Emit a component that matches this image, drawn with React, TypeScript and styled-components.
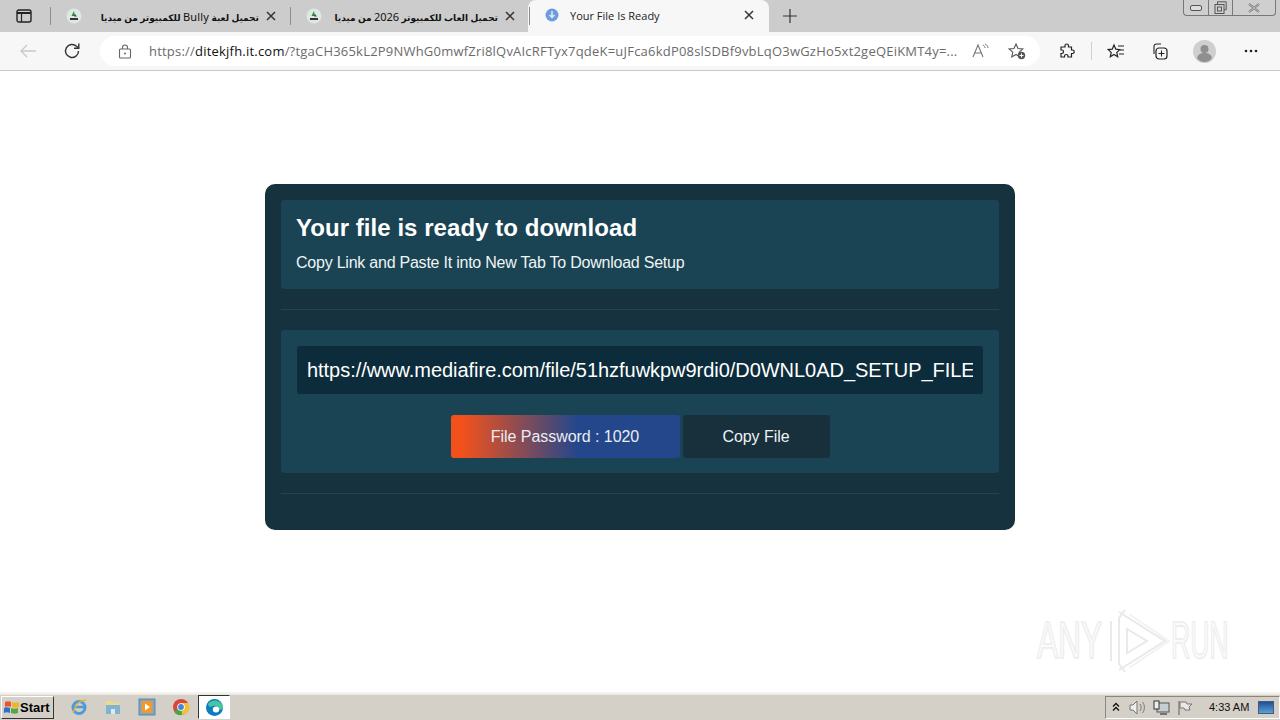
import React from "react";
import styled, { createGlobalStyle } from "styled-components";

const Global = createGlobalStyle`
  html, body { margin: 0; padding: 0; background: #fff; overflow: hidden; }
  #root { width: 1280px; height: 720px; }
  * { box-sizing: border-box; }
`;
const Page = styled.div`
  width: 1280px; height: 720px; display: flex; flex-direction: column; position: relative; overflow: hidden;
  font-family: "Liberation Sans", Arial, sans-serif;
`;
const TabStrip = styled.div`
  height: 32px; background: #cccccc; display: flex; align-items: stretch; position: relative; flex: none;
`;
const TabMenu = styled.div`
  width: 51px; display: flex; align-items: center; justify-content: center; padding-right: 3px;
  position: relative;
  &::after { content: ""; position: absolute; right: 0; top: 7px; height: 18px; width: 1px; background: #8d8d8d; }
`;
const BgTab = styled.div<{ $w: number }>`
  width: ${(p) => p.$w}px; display: flex; align-items: center; position: relative; padding-left: 15px;
  &::after { content: ""; position: absolute; right: 0; top: 7px; height: 18px; width: 1px; background: #8d8d8d; }
`;
const ActiveTab = styled.div`
  width: 241px; height: 32px; margin-left: -2px; background: #f7f7f7; border-radius: 8px 8px 0 0; display: flex; align-items: center; padding: 0 0 2px 17px;
`;
const TabTitle = styled.span`
  font: 700 9px "Noto Sans", "DejaVu Sans", sans-serif; color: #111; white-space: nowrap; flex: 1; direction: rtl; text-align: right; margin: 0 2px 0 0; min-width: 0;
  span { font-weight: 400; font-size: 11px; letter-spacing: 0.2px; }
`;
const ActiveTitle = styled.span`
  font: 400 11px "Open Sans", "Noto Sans", sans-serif; color: #222; flex: 1; margin-left: 11px;
`;
const CloseBtn = styled.span`
  width: 20px; height: 20px; margin-right: 10px; display: flex; align-items: center; justify-content: center; flex: none;
`;
const NewTab = styled.div`
  width: 42px; display: flex; align-items: center; justify-content: center;
`;
const WinButtons = styled.div`
  position: absolute; right: 4px; top: 0; width: 93px; height: 16px; border: 1px solid #777; border-top: 0; border-radius: 0 0 4px 4px; display: flex; background: #cfcfcf;
`;
const WinBtn = styled.div<{ $w: number; $line?: boolean }>`
  width: ${(p) => p.$w}px; display: flex; align-items: center; justify-content: center; border-right: ${(p) => (p.$line ? "1px solid #777" : "0")};
`;
const Toolbar = styled.div`
  height: 39px; background: #f7f7f7; border-bottom: 1px solid #c9c9c9; display: flex; align-items: center; flex: none; padding-left: 12px;
`;
const NavBtn = styled.div`
  width: 32px; height: 32px; display: flex; align-items: center; justify-content: center; margin-right: 12px;
`;
const AddressBar = styled.div`
  width: 940px; height: 30px; background: #fff; border-radius: 15px; display: flex; align-items: center; padding-left: 18px; flex: none; margin-right: 11px;
`;
const Url = styled.div`
  font: 400 13px "Open Sans", "Noto Sans", sans-serif; color: #6b6b6b; margin-left: 17px; width: 810px; white-space: nowrap; letter-spacing: 0.21px;
  b { font-weight: 400; color: #111; }
`;
const AddrIcon = styled.span<{ $gap: number }>`
  width: 20px; height: 20px; display: flex; align-items: center; justify-content: center; margin-left: ${(p) => p.$gap}px; flex: none;
`;
const ToolIcon = styled.div<{ $w?: number }>`
  width: ${(p) => p.$w ?? 44}px; display: flex; align-items: center; justify-content: center; flex: none; position: relative;
`;
const Divider = styled.span`
  width: 1px; height: 18px; background: #cfcfcf; flex: none; margin-left: 8px;
`;
const Main = styled.main`
  flex: 1; background: #fff; padding-top: 113px;
`;
const Card = styled.section`
  width: 750px; height: 346px; margin: 0 auto; background: #17323f; border-radius: 10px; padding: 16px;
`;
const Header = styled.header`
  height: 89px; background: #1a4454; border-radius: 4px; padding: 13px 15px 0; color: #fff;
`;
const Title = styled.h1`
  margin: 0; font: 700 24px/30px "Liberation Sans", Arial, sans-serif; letter-spacing: 0.05px;
`;
const Subtitle = styled.p`
  margin: 9px 0 0; font: 400 16px/22px "Liberation Sans", Arial, sans-serif; color: #eef4f6; letter-spacing: -0.23px;
`;
const Rule = styled.hr`
  border: 0; height: 1px; background: #234351; margin: 20px 0;
`;
const Panel = styled.div`
  height: 143px; background: #1a4454; border-radius: 4px; padding: 16px; display: flex; flex-direction: column; align-items: center;
`;
const LinkField = styled.input`
  width: 686px; height: 48px; flex: none; background: #0c2c3b; border: 0; outline: 0; border-radius: 3px; padding: 0 10px; margin: 0; color: #fff; font: 400 20px "Liberation Sans", Arial, sans-serif; letter-spacing: -0.04px;
`;
const Buttons = styled.div`
  display: flex; gap: 3px; margin-top: 21px;
`;
const PassBtn = styled.div`
  width: 229px; height: 43px; border-radius: 3px; background: linear-gradient(90deg, #f2511b 0%, #f2511b 5%, #24478b 55%, #24478b 100%); color: #e9edf2; font: 400 16px/43px "Liberation Sans", Arial, sans-serif; text-align: center; letter-spacing: -0.05px;
`;
const CopyBtn = styled.div`
  width: 147px; height: 43px; border-radius: 3px; background: #17303c; color: #eef2f4; font: 400 16px/43px "Liberation Sans", Arial, sans-serif; text-align: center; letter-spacing: -0.05px;
`;
const Watermark = styled.div`
  position: absolute; left: 1037px; top: 609px; height: 64px; display: flex; align-items: center; pointer-events: none;
`;
const WmText = styled.span<{ $w: number; $scale: number }>`
  display: block; width: ${(p) => p.$w}px; transform: scaleX(${(p) => p.$scale}); transform-origin: left center;
  font: 400 51px/64px "Liberation Sans", Arial, sans-serif; color: rgba(255,255,255,0.7); -webkit-text-stroke: 1.6px #ededed; white-space: nowrap;
  text-shadow: 1px 1px 2px rgba(0,0,0,0.05);
`;
const Taskbar = styled.footer`
  height: 28px; flex: none; background: #d4d0c8; border-top: 2px solid #f4f2ee; display: flex; align-items: center; padding-left: 1px; position: relative; box-shadow: inset 0 1px 0 #e8e5df;
`;
const StartBtn = styled.div`
  width: 53px; height: 23px; border: 1px solid; border-color: #fff #333 #333 #fff; display: flex; align-items: center; padding-left: 2px; font: 700 13px "Liberation Sans", Arial, sans-serif; color: #000; background: #d4d0c8; margin-right: 8px;
`;
const QuickIcon = styled.div<{ $active?: boolean }>`
  width: ${(p) => (p.$active ? 32 : 34)}px; height: 24px; display: flex; align-items: center; justify-content: center; flex: none;
  ${(p) => p.$active && `background:#fff; border:1px solid; border-color:#333 #fff #fff #333;`}
`;
const Tray = styled.div`
  margin-left: auto; width: 175px; height: 23px; border: 1px solid; border-color: #8a8780 #fff #fff #8a8780; display: flex; align-items: center;
`;
const TrayIcon = styled.div<{ $w: number }>`
  width: ${(p) => p.$w}px; display: flex; align-items: center; justify-content: center; flex: none;
`;
const Clock = styled.span`
  font: 400 11px "Liberation Sans", Arial, sans-serif; color: #111; margin-left: 12px; white-space: nowrap;
`;
const Desktop = styled.div`
  width: 16px; height: 13px; background: linear-gradient(180deg, #1f4f9a, #5aa0d8); border: 1px solid #4a5a70; margin-left: 9px; flex: none;
`;

const X = ({ c = "#333" }: { c?: string }) => (
  <svg width="10" height="10" viewBox="0 0 10 10"><path d="M1 1l8 8M9 1L1 9" stroke={c} strokeWidth="1.5" /></svg>
);
const SiteIcon = () => (
  <svg width="16" height="16" viewBox="0 0 16 16">
    <circle cx="8" cy="8" r="7.5" fill="#dfe7e2" />
    <path d="M8 3l1 5H5.5z" fill="#2c8a3e" />
    <path d="M9 6l2 2.5H8z" fill="#1e5f2c" />
    <rect x="4" y="10" width="8" height="2" fill="#333" />
  </svg>
);

export default function App() {
  return (
    <Page>
      <Global />
      <TabStrip>
        <TabMenu>
          <svg width="16" height="14" viewBox="0 0 16 14"><rect x="1" y="1" width="14" height="12" rx="2" fill="none" stroke="#222" strokeWidth="1.4" /><path d="M1 4h14" stroke="#222" strokeWidth="2" /><path d="M5.5 4v9" stroke="#222" strokeWidth="1.2" /></svg>
        </TabMenu>
        <BgTab $w={240}>
          <SiteIcon />
          <TabTitle>تحميل لعبة <span>Bully</span> للكمبيوتر من ميديا</TabTitle>
          <CloseBtn><X /></CloseBtn>
        </BgTab>
        <BgTab $w={239}>
          <SiteIcon />
          <TabTitle>تحميل العاب للكمبيوتر <span>2026</span> من ميديا</TabTitle>
          <CloseBtn><X /></CloseBtn>
        </BgTab>
        <ActiveTab>
          <svg width="14" height="14" viewBox="0 0 14 14"><circle cx="7" cy="7" r="6.5" fill="#6d9be0" /><path d="M7 3v6M4.5 7L7 9.5 9.5 7" stroke="#dfeaf9" strokeWidth="1.5" fill="none" /></svg>
          <ActiveTitle>Your File Is Ready</ActiveTitle>
          <CloseBtn><X /></CloseBtn>
        </ActiveTab>
        <NewTab>
          <svg width="14" height="14" viewBox="0 0 14 14"><path d="M7 0v14M0 7h14" stroke="#333" strokeWidth="1.2" /></svg>
        </NewTab>
        <WinButtons>
          <WinBtn $w={25} $line><svg width="12" height="6" viewBox="0 0 12 6"><rect x="0.5" y="0.5" width="11" height="5" rx="1.5" fill="#ddd" stroke="#555" /></svg></WinBtn>
          <WinBtn $w={24} $line><svg width="13" height="13" viewBox="0 0 13 13"><path d="M3.5 3V.8h8.7v8H10" fill="none" stroke="#555" /><rect x="1" y="3.5" width="9" height="9" fill="none" stroke="#555" /><rect x="3.5" y="6" width="4" height="4" fill="none" stroke="#555" /></svg></WinBtn>
          <WinBtn $w={42}><svg width="12" height="10" viewBox="0 0 12 10"><path d="M1 1l10 8M11 1L1 9" stroke="#666" strokeWidth="2" /><path d="M1 1l10 8M11 1L1 9" stroke="#eee" strokeWidth="0.7" /></svg></WinBtn>
        </WinButtons>
      </TabStrip>
      <Toolbar>
        <NavBtn>
          <svg width="18" height="16" viewBox="0 0 18 16"><path d="M17 8H2M8 2L2 8l6 6" stroke="#c9c9c9" strokeWidth="1.4" fill="none" /></svg>
        </NavBtn>
        <NavBtn>
          <svg width="18" height="18" viewBox="0 0 18 18"><path d="M15.5 9a6.5 6.5 0 1 1-2-4.700L15.500 6" stroke="#333" strokeWidth="1.4" fill="none" /><path d="M15.800 1.500V6.300H11" stroke="#333" strokeWidth="1.4" fill="none" /></svg>
        </NavBtn>
        <AddressBar>
          <svg width="14" height="15" viewBox="0 0 14 15"><rect x="1.500" y="5" width="11" height="9" rx="1" fill="none" stroke="#666" strokeWidth="1.100" /><path d="M4.500 5V3.500a2.500 2.500 0 0 1 5 0V5" fill="none" stroke="#666" strokeWidth="1.100" /><circle cx="7" cy="9.500" r="1" fill="#666" /></svg>
          <Url>https://<b>ditekjfh.it.com</b>/?tgaCH365kL2P9NWhG0mwfZri8lQvAIcRFTyx7qdeK=uJFca6kdP08slSDBf9vbLqO3wGzHo5xt2geQEiKMT4y=...</Url>
          <AddrIcon $gap={12}>
            <svg width="18" height="16" viewBox="0 0 18 16"><path d="M1 14L6 2l5 12M3 10h6" stroke="#777" strokeWidth="1.100" fill="none" /><path d="M11 2c1.500.8 2 2 2 3M13 1c2 1 3 2.500 3 4" stroke="#777" strokeWidth="1" fill="none" /></svg>
          </AddrIcon>
          <AddrIcon $gap={16}>
            <svg width="18" height="18" viewBox="0 0 18 18"><path d="M8 2l2 4.500 4.800.5-3.600 3.200 1 4.800L8 12.500 3.800 15l1-4.800L1.200 7 6 6.500z" fill="none" stroke="#555" strokeWidth="1.100" /><circle cx="13.500" cy="13.500" r="3.700" fill="#555" /><path d="M13.500 11.500v4M11.500 13.500h4" stroke="#fff" strokeWidth="1" /></svg>
          </AddrIcon>
        </AddressBar>
        <ToolIcon $w={32}>
          <svg width="16" height="16" viewBox="0 0 16 16"><path d="M6 2.500c0-2 3.500-2 3.500 0V4h3v3h1.200c2 0 2 3.500 0 3.500H12.500v3.500h-3.500v-1c0-2-3.500-2-3.500 0v1H2v-3.500h1c2 0 2-3.500 0-3.500H2V4h4z" fill="none" stroke="#222" strokeWidth="1.200" /></svg>
        </ToolIcon>
        <Divider />
        <ToolIcon $w={48}>
          <svg width="18" height="17" viewBox="0 0 18 17"><path d="M7 2l1.800 4.200 4 .4-3 2.800.9 4.300L7 11.500l-3.700 2.200.9-4.300-3-2.800 4-.4z" fill="none" stroke="#222" strokeWidth="1.200" /><path d="M11 3h6M13 7h4M12 11h5" stroke="#222" strokeWidth="1.100" /></svg>
        </ToolIcon>
        <ToolIcon $w={38}>
          <svg width="17" height="17" viewBox="0 0 17 17"><path d="M3 11V3.500A2.500 2.500 0 0 1 5.500 1H10" fill="none" stroke="#222" strokeWidth="1.100" /><rect x="5" y="5" width="11" height="11" rx="3" fill="none" stroke="#222" strokeWidth="1.200" /><path d="M10.500 7.500v6M7.500 10.500h6" stroke="#222" strokeWidth="1.100" /></svg>
        </ToolIcon>
        <ToolIcon $w={52}>
          <svg width="23" height="23" viewBox="0 0 23 23"><circle cx="11.500" cy="11.500" r="11.500" fill="#cfcfcf" /><circle cx="11.500" cy="9" r="4" fill="#8f8f8f" /><path d="M4 18c1-4 4-5 7.500-5s6.500 1 7.500 5c-2 3-5 4-7.500 4s-5.500-1-7.500-4z" fill="#8f8f8f" /></svg>
        </ToolIcon>
        <ToolIcon $w={42}>
          <svg width="14" height="4" viewBox="0 0 14 4"><circle cx="2" cy="2" r="1.300" fill="#222" /><circle cx="7" cy="2" r="1.300" fill="#222" /><circle cx="12" cy="2" r="1.300" fill="#222" /></svg>
        </ToolIcon>
      </Toolbar>
      <Main>
        <Card>
          <Header>
            <Title>Your file is ready to download</Title>
            <Subtitle>Copy Link and Paste It into New Tab To Download Setup</Subtitle>
          </Header>
          <Rule />
          <Panel>
            <LinkField readOnly value="https://www.mediafire.com/file/51hzfuwkpw9rdi0/D0WNL0AD_SETUP_FILE_V2026.zip" />
            <Buttons>
              <PassBtn>File Password : 1020</PassBtn>
              <CopyBtn>Copy File</CopyBtn>
            </Buttons>
          </Panel>
          <Rule />
        </Card>
      </Main>
      <Watermark>
        <WmText $w={70} $scale={0.62}>ANY</WmText>
        <svg width="64" height="64" viewBox="0 0 64 64">
          <g fill="none" stroke="#e9e9e9" strokeWidth="2">
            <path d="M4 12v40" />
            <path d="M12 3l46 29-46 29" />
            <path d="M18 1l-6 8v46l6 8" />
            <path d="M20 20l20 12-20 12z" />
            <path d="M22 5l40 27-40 27" opacity="0.6" />
          </g>
        </svg>
        <WmText $w={60} $scale={0.52}>RUN</WmText>
      </Watermark>
      <Taskbar>
        <StartBtn>
          <svg width="16" height="16" viewBox="0 0 16 16"><path d="M1 3c2-1 4-1 6 0v5c-2-1-4-1-6 0z" fill="#e8562a" /><path d="M8 3c2 1 4 1 7 0v5c-3 1-5 1-7 0z" fill="#f2b32c" /><path d="M0 9c2-1 4-1 6 0v5c-2-1-4-1-6 0z" fill="#2f6fc9" /><path d="M7 9c2 1 5 1 7 0v5c-2 1-5 1-7 0z" fill="#5aa83a" /></svg>
          Start
        </StartBtn>
        <QuickIcon>
          <svg width="18" height="18" viewBox="0 0 18 18"><circle cx="9" cy="9.500" r="6" fill="none" stroke="#4f9bd8" strokeWidth="3" /><path d="M4 9h10" stroke="#4f9bd8" strokeWidth="2.500" /><path d="M3 15C5 7 10 2 16 2" fill="none" stroke="#e5b43a" strokeWidth="1.300" /></svg>
        </QuickIcon>
        <QuickIcon>
          <svg width="18" height="18" viewBox="0 0 18 18"><path d="M2 3h6l2 2h6v3H2z" fill="#edd98a" /><rect x="2" y="7" width="14" height="9" fill="#7fb3cf" /><rect x="7" y="11" width="4" height="5" fill="#dfe8ec" /></svg>
        </QuickIcon>
        <QuickIcon>
          <svg width="18" height="18" viewBox="0 0 18 18"><rect x="1" y="1" width="16" height="16" fill="#7aa6cc" stroke="#5e87ac" /><rect x="3.500" y="3" width="11" height="12" fill="#f09a2a" /><path d="M7 5.500l5 3.500-5 3.500z" fill="#fff" /></svg>
        </QuickIcon>
        <QuickIcon>
          <svg width="18" height="18" viewBox="0 0 18 18"><circle cx="9" cy="9" r="8" fill="#d9473a" /><path d="M9 9L2 13.500A8 8 0 0 0 11 16.800z" fill="#4ba24f" /><path d="M9 5h7.500A8 8 0 0 1 10 17z" fill="#eec33a" /><circle cx="9" cy="9" r="3.800" fill="#fff" /><circle cx="9" cy="9" r="2.900" fill="#4a80d8" /></svg>
        </QuickIcon>
        <QuickIcon $active>
          <svg width="19" height="19" viewBox="0 0 19 19"><circle cx="9.500" cy="9.500" r="8.500" fill="#0c7cc0" /><path d="M3 6c3-5 12-5 15 2 .5 3-2 4-5 4 1-3-2-5-5-4-2 1-4 2-5-2z" fill="#44c7a0" /><ellipse cx="11" cy="11.500" rx="3.200" ry="3" fill="#fff" /></svg>
        </QuickIcon>
        <Tray>
          <TrayIcon $w={19}><svg width="8" height="10" viewBox="0 0 8 10"><path d="M1 4.500l3-3 3 3M1 8.500l3-3 3 3" fill="none" stroke="#111" strokeWidth="1.300" /></svg></TrayIcon>
          <TrayIcon $w={24}><svg width="18" height="15" viewBox="0 0 18 15"><path d="M2 5h3l4-4v13l-4-4H2z" fill="#eee" stroke="#777" /><path d="M12 4c1.500 2 1.500 5 0 7M14.500 2c2.500 3 2.500 8 0 11" fill="none" stroke="#777" /></svg></TrayIcon>
          <TrayIcon $w={24}><svg width="18" height="15" viewBox="0 0 18 15"><rect x="5" y="3" width="12" height="9" fill="#c5cdd0" stroke="#555" /><rect x="2" y="1" width="5" height="8" fill="#eee" stroke="#333" /><path d="M8 14h7" stroke="#555" strokeWidth="1.500" /></svg></TrayIcon>
          <TrayIcon $w={24}><svg width="16" height="15" viewBox="0 0 16 15"><path d="M2 1v14" stroke="#777" strokeWidth="1.300" /><path d="M3 2h6l1 2h5l-3 3 1 3H8L7 8H3z" fill="#e8e8e8" stroke="#777" /></svg></TrayIcon>
          <Clock>4:33 AM</Clock>
          <Desktop />
        </Tray>
      </Taskbar>
    </Page>
  );
}
